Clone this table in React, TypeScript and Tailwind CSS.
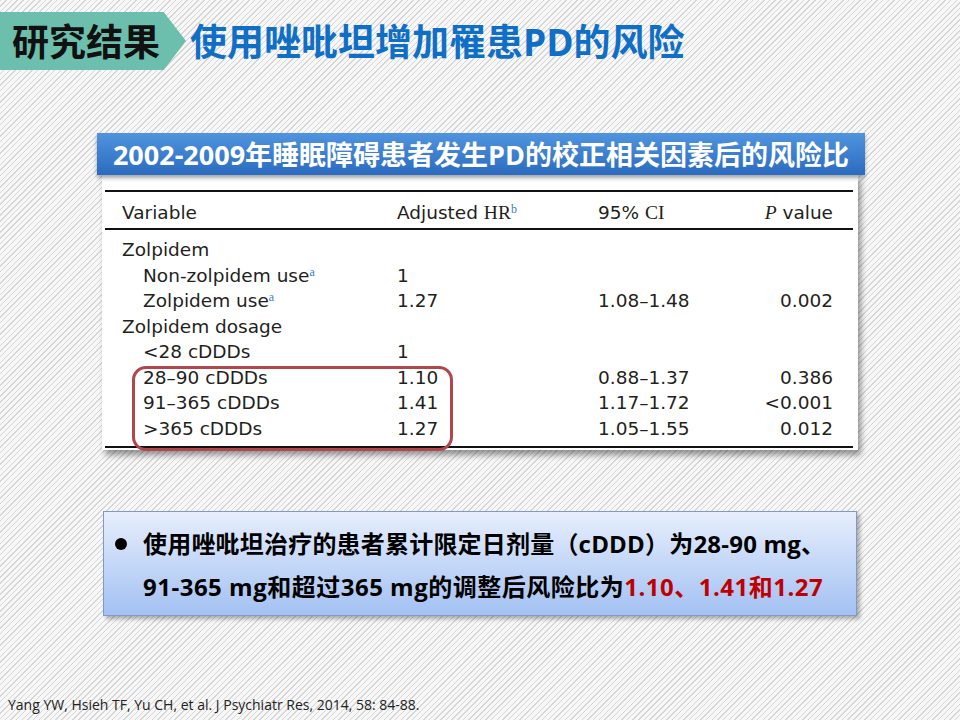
import React from 'react';

const cjk = "font-['Open_Sans','Noto_Sans_CJK_SC',sans-serif]";
const tableFont = "font-['DejaVu_Sans',sans-serif]";

type Row = {
    label: string;
    indent?: boolean;
    sup?: string;
    hr?: string;
    ci?: string;
    p?: string;
};

const rows: Row[] = [
    { label: 'Zolpidem' },
    { label: 'Non-zolpidem use', indent: true, sup: 'a', hr: '1' },
    { label: 'Zolpidem use', indent: true, sup: 'a', hr: '1.27', ci: '1.08–1.48', p: '0.002' },
    { label: 'Zolpidem dosage' },
    { label: '<28 cDDDs', indent: true, hr: '1' },
    { label: '28–90 cDDDs', indent: true, hr: '1.10', ci: '0.88–1.37', p: '0.386' },
    { label: '91–365 cDDDs', indent: true, hr: '1.41', ci: '1.17–1.72', p: '<0.001' },
    { label: '>365 cDDDs', indent: true, hr: '1.27', ci: '1.05–1.55', p: '0.012' },
];

const Header = () => (
    <div className="flex items-center pt-[12px]">
        <div className="h-[58px] w-[186px] bg-[#6dbfad] [clip-path:polygon(0_0,88%_0,100%_50%,88%_100%,0_100%)] flex items-center pl-[12px]">
            <span className={`${cjk} text-[37px] font-bold leading-none text-[#111]`}>研究结果</span>
        </div>
        <h1 className={`${cjk} ml-[4px] text-[37px] font-bold leading-none text-[#0f6fc6]`}>
            使用唑吡坦增加罹患PD的风险
        </h1>
    </div>
);

const HazardTable = () => (
    <div className="mt-[63px]">
        <div className="relative z-10 ml-[97px] w-[768px] h-[42px] bg-gradient-to-b from-[#5094de] to-[#2b6bc0] shadow-[0_3px_4px_rgba(0,0,0,0.35)] flex items-center justify-center">
            <span className={`${cjk} text-[27px] font-bold leading-none text-white`}>
                2002-2009年睡眠障碍患者发生PD的校正相关因素后的风险比
            </span>
        </div>
        <div className="relative ml-[102px] w-[756px] bg-white shadow-[3px_5px_6px_rgba(0,0,0,0.4)] pt-[15px] pb-[2px]">
            <div className="ml-[3px] mr-[5px] border-t-2 border-b-2 border-[#111]">
                <div className={`${tableFont} grid grid-cols-[275px_201px_100px_1fr] pl-[17px] pr-[20px] h-[36px] pt-[5px] items-center text-[18.5px] text-[#231f20]`}>
                    <span>Variable</span>
                    <span>
                        Adjusted <span className="font-['Liberation_Serif',serif] text-[19.5px]">HR</span>
                        <sup className="text-[12px] text-[#3a7bbf] font-['Liberation_Serif',serif]">b</sup>
                    </span>
                    <span>
                        95% <span className="font-['Liberation_Serif',serif] text-[19.5px]">CI</span>
                    </span>
                    <span className="text-right">
                        <i className="font-['Liberation_Serif',serif] text-[19.5px]">P</i> value
                    </span>
                </div>
            </div>
            <div className="ml-[3px] mr-[5px] pt-[6px] pb-[6px] border-b-2 border-[#111]">
                {rows.map((r) => (
                    <div
                        key={r.label}
                        className={`${tableFont} grid grid-cols-[275px_201px_100px_1fr] pl-[17px] pr-[20px] h-[25.5px] items-center text-[18.5px] text-[#231f20]`}>
                        <span className={r.indent ? 'pl-[21px]' : ''}>
                            {r.label}
                            {r.sup && <sup className="text-[12px] text-[#3a7bbf] font-['Liberation_Serif',serif]">{r.sup}</sup>}
                        </span>
                        <span>{r.hr}</span>
                        <span>{r.ci}</span>
                        <span className="text-right">{r.p}</span>
                    </div>
                ))}
            </div>
            {/* highlight around the dosage rows */}
            <div className="absolute left-[30px] top-[191px] w-[321px] h-[85px] border-[3px] border-[#b0474a] rounded-[14px]" />
        </div>
    </div>
);

const Summary = () => (
    <div className="mt-[61px] ml-[103px] w-[754px] h-[105px] border border-[#7f9bc4] bg-gradient-to-b from-[#e7eefc] to-[#a3c1f2] shadow-[3px_3px_4px_rgba(0,0,0,0.3)] flex pl-[11px] pt-[10px]">
        <div className="mt-[16px] h-[12px] w-[12px] rounded-full bg-black shrink-0" />
        <div className={`${cjk} ml-[16px] text-[24px] font-bold leading-[43px] text-black`}>
            <p className="tracking-[0.2px]">使用唑吡坦治疗的患者累计限定日剂量（cDDD）为28-90 mg、</p>
            <p className="tracking-[0.5px]">
                91-365 mg和超过365 mg的调整后风险比为
                <span className="text-[#c00000]">1.10、1.41和1.27</span>
            </p>
        </div>
    </div>
);

export default function App() {
    return (
        <div className="w-[960px] h-[720px] overflow-hidden flex flex-col bg-[#f6f6f6] bg-[image:repeating-linear-gradient(135deg,#d6d6d6_0px,#d6d6d6_1px,#f7f7f7_1px,#f7f7f7_4px)]">
            <Header />
            <HazardTable />
            <Summary />
            <div className="mt-auto pb-[6px] pl-[8px] font-['Open_Sans',sans-serif] text-[14px] leading-[18px] text-[#222]">
                Yang YW, Hsieh TF, Yu CH, et al. J Psychiatr Res, 2014, 58: 84-88.
            </div>
        </div>
    );
}
